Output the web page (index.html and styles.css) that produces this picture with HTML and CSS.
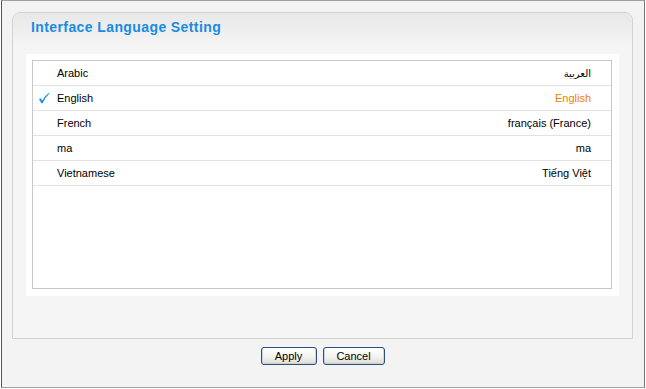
FILE: index.html
```html
<!DOCTYPE html>
<html lang="en">
<head>
    <meta charset="UTF-8">
    <title>Interface Language Setting</title>
    <link rel="stylesheet" href="styles.css">
</head>
<body>
    <div class="window">
        <div class="panel">
            <div class="panel-header">Interface Language Setting</div>
            <div class="panel-body">
                <ul class="lang-list">
                    <li class="lang-row">
                        <span class="lang-name">Arabic</span>
                        <span class="lang-native" lang="ar">العربية</span>
                    </li>
                    <li class="lang-row selected">
                        <svg class="check" width="12" height="12" viewBox="0 0 12 12">
                            <path d="M1 7.2 L2.6 6.2 L4.2 8.6 Q7 3.5 11 0.8 L11.4 1.4 Q7.6 4.8 4.6 11.2 L3.4 11.2 Z" fill="#1a96d4"/>
                        </svg>
                        <span class="lang-name">English</span>
                        <span class="lang-native">English</span>
                    </li>
                    <li class="lang-row">
                        <span class="lang-name">French</span>
                        <span class="lang-native">français (France)</span>
                    </li>
                    <li class="lang-row">
                        <span class="lang-name">ma</span>
                        <span class="lang-native">ma</span>
                    </li>
                    <li class="lang-row">
                        <span class="lang-name">Vietnamese</span>
                        <span class="lang-native">Tiếng Việt</span>
                    </li>
                </ul>
            </div>
        </div>
        <div class="actions">
            <button class="btn btn-apply">Apply</button>
            <button class="btn btn-cancel">Cancel</button>
        </div>
    </div>
</body>
</html>
```

FILE: styles.css
```css
body {
    margin: 0;
    background-color: #fff;
    font-family: 'Liberation Sans', Arial, sans-serif;
    font-size: 11px;
    color: #000;
}

.window {
    box-sizing: border-box;
    width: 644px;
    height: 388px;
    margin-left: 1px;
    padding: 11px 11px 0 10px;
    background-color: #f3f3f3;
    border: 1px solid #a0a0a0;
    border-left: 1px solid #555;
    border-right: 1px solid #777;
}

.panel {
    box-sizing: border-box;
    height: 327px;
    background-color: #f5f5f5;
    border: 1px solid #d2d2d2;
    border-radius: 8px 8px 0 0;
}

.panel-header {
    height: 35px;
    padding: 6px 0 0 18px;
    box-sizing: border-box;
    border-radius: 7px 7px 0 0;
    background: linear-gradient(#e8e8e8, #f5f5f5);
    color: #1a8be0;
    font-weight: bold;
    font-size: 14px;
    line-height: 16px;
    letter-spacing: 0.4px;
    margin-bottom: 6px;
}

.panel-body {
    margin: 0 13px;
    padding: 6px 7px 7px 6px;
    background-color: #fff;
}

.lang-list {
    list-style: none;
    margin: 0;
    padding: 0;
    height: 229px;
    box-sizing: border-box;
    border: 1px solid #c8c8c8;
}

.lang-row {
    position: relative;
    display: flex;
    justify-content: space-between;
    align-items: center;
    height: 25px;
    box-sizing: border-box;
    padding: 0 20px 0 24px;
    border-bottom: 1px solid #e2e2e2;
}

.lang-native[lang="ar"] {
    font-family: 'DejaVu Sans', sans-serif;
    font-size: 10px;
}

.check {
    position: absolute;
    left: 5px;
    top: 6px;
}

.selected .lang-native {
    color: #f08000;
}

.actions {
    display: flex;
    justify-content: center;
    gap: 6px;
    margin-top: 8px;
}

.btn {
    height: 18px;
    padding: 0;
    font-family: 'Liberation Sans', Arial, sans-serif;
    font-size: 11px;
    color: #000;
    border: 1px solid #2d4f80;
    border-radius: 3px;
    background: linear-gradient(#fff, #f2f2ee 60%, #dcdad2);
    box-shadow: inset 0 -1px 0 #d0cfc8, inset 1px 0 0 #c6d4f0, inset -1px 0 0 #c6d4f0;
}

.btn-apply {
    width: 56px;
}

.btn-cancel {
    width: 62px;
}
```
